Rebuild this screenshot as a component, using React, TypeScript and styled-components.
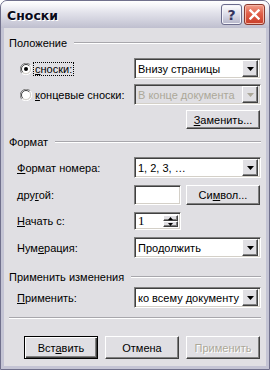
import React from "react";
import styled, { createGlobalStyle, css } from "styled-components";

const Global = createGlobalStyle`
  html, body { margin: 0; padding: 0; background: #fff; }
  body { font-family: "Liberation Sans", Arial, sans-serif; font-size: 11px; color: #000; }
`;

const FACE = "#e0dfe3";

const Window = styled.div`
  width: 270px;
  height: 370px;
  box-sizing: border-box;
  display: flex;
  flex-direction: column;
  background: #c4c4d4;
  border: 1px solid #70708c;
  border-radius: 7px 7px 0 0;
  padding: 0 3px 3px;
  overflow: hidden;
`;

const TitleBar = styled.div`
  height: 27px;
  margin: 0 -3px;
  padding: 0 4px 0 6px;
  display: flex;
  align-items: center;
  background: linear-gradient(
    to bottom,
    #ffffff 0%,
    #f4f4f8 18%,
    #e4e4ec 40%,
    #d2d2de 70%,
    #bfbfcf 100%
  );
`;

const Title = styled.div`
  flex: 1;
  font-family: "DejaVu Sans", "Liberation Sans", sans-serif;
  font-weight: bold;
  font-size: 12.5px;
  color: #0a0a1a;
  text-shadow: 1px 1px 0 #ffffff;
  padding-top: 2px;
`;

const CapButton = styled.div<{ $close?: boolean }>`
  width: 21px;
  height: 21px;
  box-sizing: border-box;
  border-radius: 3px;
  margin-left: 2px;
  display: flex;
  align-items: center;
  justify-content: center;
  ${(p) =>
    p.$close
      ? css`
          border: 1px solid #8a3a2e;
          background: linear-gradient(to bottom, #f2a08c 0%, #e0604a 45%, #c83c28 100%);
          box-shadow: inset 0 0 0 1px #f6b6a6;
        `
      : css`
          border: 1px solid #6c6c8c;
          background: linear-gradient(to bottom, #ffffff 0%, #dcdce8 50%, #b4b4c8 100%);
          box-shadow: inset 0 0 0 1px #f4f4fa;
        `}
`;

const HelpGlyph = styled.span`
  font-family: "DejaVu Sans", sans-serif;
  font-weight: bold;
  font-size: 14px;
  color: #34345e;
  line-height: 1;
`;

const Body = styled.div`
  flex: 1;
  background: ${FACE};
  padding: 0 5px;
  display: flex;
  flex-direction: column;
`;

const GroupHeader = styled.div<{ $top: number }>`
  margin-top: ${(p) => p.$top}px;
  height: 14px;
  display: flex;
  align-items: center;
  &::after {
    content: "";
    flex: 1;
    height: 0;
    border-top: 1px solid #a8a7ac;
    border-bottom: 1px solid #ffffff;
    margin-left: 7px;
  }
`;

const Row = styled.div<{ $top: number; $h: number }>`
  margin-top: ${(p) => p.$top}px;
  height: ${(p) => p.$h}px;
  display: flex;
  align-items: center;
`;

const LabelCell = styled.div<{ $indent?: number }>`
  width: 125px;
  flex: none;
  box-sizing: border-box;
  padding-left: ${(p) => p.$indent ?? 8}px;
  display: flex;
  align-items: center;
  white-space: nowrap;
`;

const Key = styled.span`
  text-decoration: underline;
  text-underline-offset: 1px;
`;

const FocusLabel = styled.span`
  outline: 1px dotted #000;
  outline-offset: 0px;
  padding: 0 1px;
  margin-left: 2px;
`;

const RadioLabel = styled.span`
  padding: 0 1px;
  margin-left: 2px;
`;

const sunken = css`
  box-sizing: border-box;
  border: 1px solid;
  border-color: #808080 #ffffff #ffffff #808080;
  box-shadow: inset 1px 1px 0 #404040, inset -1px -1px 0 #d4d0c8;
`;

const raised = css`
  box-sizing: border-box;
  background: ${FACE};
  border: 1px solid;
  border-color: #ffffff #404040 #404040 #ffffff;
  box-shadow: inset -1px -1px 0 #808080, inset 1px 1px 0 ${FACE};
`;

const Combo = styled.div<{ $disabled?: boolean }>`
  ${sunken};
  width: 127px;
  height: 21px;
  display: flex;
  align-items: center;
  padding: 2px 2px 2px 3px;
  background: ${(p) => (p.$disabled ? FACE : "#fff")};
  color: ${(p) => (p.$disabled ? "#aca899" : "#000")};
  font-size: 11px;
`;

const ComboText = styled.span`
  flex: 1;
  white-space: nowrap;
  overflow: hidden;
`;

const DropBtn = styled.div`
  ${raised};
  width: 16px;
  height: 17px;
  flex: none;
  display: flex;
  align-items: center;
  justify-content: center;
`;

const Arrow = ({ color = "#000" }: { color?: string }) => (
  <svg width="7" height="4" viewBox="0 0 7 4" style={{ display: "block" }}>
    <polygon points="0,0 7,0 3.5,4" fill={color} />
  </svg>
);

const SmallArrow = ({ up }: { up?: boolean }) => (
  <svg width="5" height="3" viewBox="0 0 5 3" style={{ display: "block" }}>
    <polygon points={up ? "0,3 5,3 2.5,0" : "0,0 5,0 2.5,3"} fill="#000" />
  </svg>
);

const TextBox = styled.div<{ $h: number }>`
  ${sunken};
  width: 47px;
  height: ${(p) => p.$h}px;
  background: #fff;
  display: flex;
  align-items: center;
  padding: 2px;
  font-family: "Liberation Serif", serif;
  font-size: 13px;
`;

const SpinText = styled.span`
  flex: 1;
  padding-left: 1px;
`;

const SpinCol = styled.div`
  width: 15px;
  height: 100%;
  display: flex;
  flex-direction: column;
`;

const SpinBtn = styled.div`
  ${raised};
  flex: 1;
  display: flex;
  align-items: center;
  justify-content: center;
`;

const Spacer = styled.div`
  flex: 1;
`;

const Button = styled.div<{ $w?: number; $h?: number; $default?: boolean; $disabled?: boolean }>`
  ${raised};
  width: ${(p) => p.$w ?? 74}px;
  height: ${(p) => p.$h ?? 23}px;
  flex: none;
  display: flex;
  align-items: center;
  justify-content: center;
  font-size: 11px;
  color: ${(p) => (p.$disabled ? "#aca899" : "#000")};
  text-shadow: ${(p) => (p.$disabled ? "1px 1px 0 #fff" : "none")};
  ${(p) =>
    p.$default &&
    css`
      border: 1px solid #000;
      box-shadow: inset 1px 1px 0 #fff, inset -1px -1px 0 #404040, inset -2px -2px 0 #808080;
    `}
`;

const SideButton = styled(Button)`
  margin-right: 1px;
`;

const Separator = styled.div`
  margin-top: 9px;
  border-top: 1px solid #a8a7ac;
  border-bottom: 1px solid #fff;
`;

const ButtonRow = styled.div`
  margin-top: 17px;
  display: flex;
  justify-content: flex-end;
  gap: 7px;
  padding-right: 1px;
`;

const RadioWrap = styled.div`
  display: flex;
  align-items: center;
`;

const Radio = ({ checked }: { checked?: boolean }) => (
  <svg width="12" height="12" viewBox="0 0 12 12" style={{ display: "block", flex: "none" }}>
    <path d="M10.24 1.76 A6 6 0 0 0 1.76 10.24" stroke="#808080" strokeWidth="1" fill="none" />
    <path d="M1.76 10.24 A6 6 0 0 0 10.24 1.76" stroke="#ffffff" strokeWidth="1" fill="none" />
    <circle cx="6" cy="6" r="4.6" fill="#fff" />
    <path d="M9.2 2.8 A4.5 4.5 0 0 0 2.8 9.2" stroke="#404040" strokeWidth="1" fill="none" />
    <path d="M2.8 9.2 A4.5 4.5 0 0 0 9.2 2.8" stroke="#d4d0c8" strokeWidth="1" fill="none" />
    {checked && <circle cx="6" cy="6" r="2" fill="#000" />}
  </svg>
);

const CloseX = () => (
  <svg width="11" height="11" viewBox="0 0 11 11" style={{ display: "block" }}>
    <path d="M1.5 1.5 L9.5 9.5 M9.5 1.5 L1.5 9.5" stroke="#fff" strokeWidth="2.4" strokeLinecap="square" />
  </svg>
);

export default function App() {
  return (
    <>
      <Global />
      <Window>
        <TitleBar>
          <Title>Сноски</Title>
          <CapButton>
            <HelpGlyph>?</HelpGlyph>
          </CapButton>
          <CapButton $close>
            <CloseX />
          </CapButton>
        </TitleBar>
        <Body>
          <GroupHeader $top={8}>Положение</GroupHeader>
          <Row $top={8} $h={21}>
            <LabelCell $indent={11}>
              <RadioWrap>
                <Radio checked />
                <FocusLabel>
                  <Key>с</Key>носки:
                </FocusLabel>
              </RadioWrap>
            </LabelCell>
            <Combo>
              <ComboText>Внизу страницы</ComboText>
              <DropBtn>
                <Arrow />
              </DropBtn>
            </Combo>
          </Row>
          <Row $top={5} $h={21}>
            <LabelCell $indent={11}>
              <RadioWrap>
                <Radio />
                <RadioLabel>
                  <Key>к</Key>онцевые сноски:
                </RadioLabel>
              </RadioWrap>
            </LabelCell>
            <Combo $disabled>
              <ComboText>В конце документа</ComboText>
              <DropBtn>
                <Arrow color="#aca899" />
              </DropBtn>
            </Combo>
          </Row>
          <Row $top={5} $h={19}>
            <Spacer />
            <SideButton $w={74} $h={19}>
              <span>
                <Key>З</Key>аменить...
              </span>
            </SideButton>
          </Row>

          <GroupHeader $top={6}>Формат</GroupHeader>
          <Row $top={8} $h={21}>
            <LabelCell>
              <span>
                <Key>Ф</Key>ормат номера:
              </span>
            </LabelCell>
            <Combo>
              <ComboText>1, 2, 3, …</ComboText>
              <DropBtn>
                <Arrow />
              </DropBtn>
            </Combo>
          </Row>
          <Row $top={7} $h={20}>
            <LabelCell>
              <span>
                дру<Key>г</Key>ой:
              </span>
            </LabelCell>
            <TextBox $h={20} />
            <Spacer />
            <SideButton $w={74} $h={20}>
              <span>
                Си<Key>м</Key>вол...
              </span>
            </SideButton>
          </Row>
          <Row $top={7} $h={18}>
            <LabelCell>
              <span>
                <Key>Н</Key>ачать с:
              </span>
            </LabelCell>
            <TextBox $h={18}>
              <SpinText>1</SpinText>
              <SpinCol>
                <SpinBtn>
                  <SmallArrow up />
                </SpinBtn>
                <SpinBtn>
                  <SmallArrow />
                </SpinBtn>
              </SpinCol>
            </TextBox>
          </Row>
          <Row $top={7} $h={21}>
            <LabelCell>
              <span>
                Нум<Key>е</Key>рация:
              </span>
            </LabelCell>
            <Combo>
              <ComboText>Продолжить</ComboText>
              <DropBtn>
                <Arrow />
              </DropBtn>
            </Combo>
          </Row>

          <GroupHeader $top={12}>Применить изменения</GroupHeader>
          <Row $top={3} $h={21}>
            <LabelCell>
              <span>
                <Key>П</Key>рименить:
              </span>
            </LabelCell>
            <Combo>
              <ComboText>ко всему документу</ComboText>
              <DropBtn>
                <Arrow />
              </DropBtn>
            </Combo>
          </Row>
          <Separator />
          <ButtonRow>
            <Button $default>
              <span>
                Вст<Key>а</Key>вить
              </span>
            </Button>
            <Button>Отмена</Button>
            <Button $disabled>Применить</Button>
          </ButtonRow>
        </Body>
      </Window>
    </>
  );
}
